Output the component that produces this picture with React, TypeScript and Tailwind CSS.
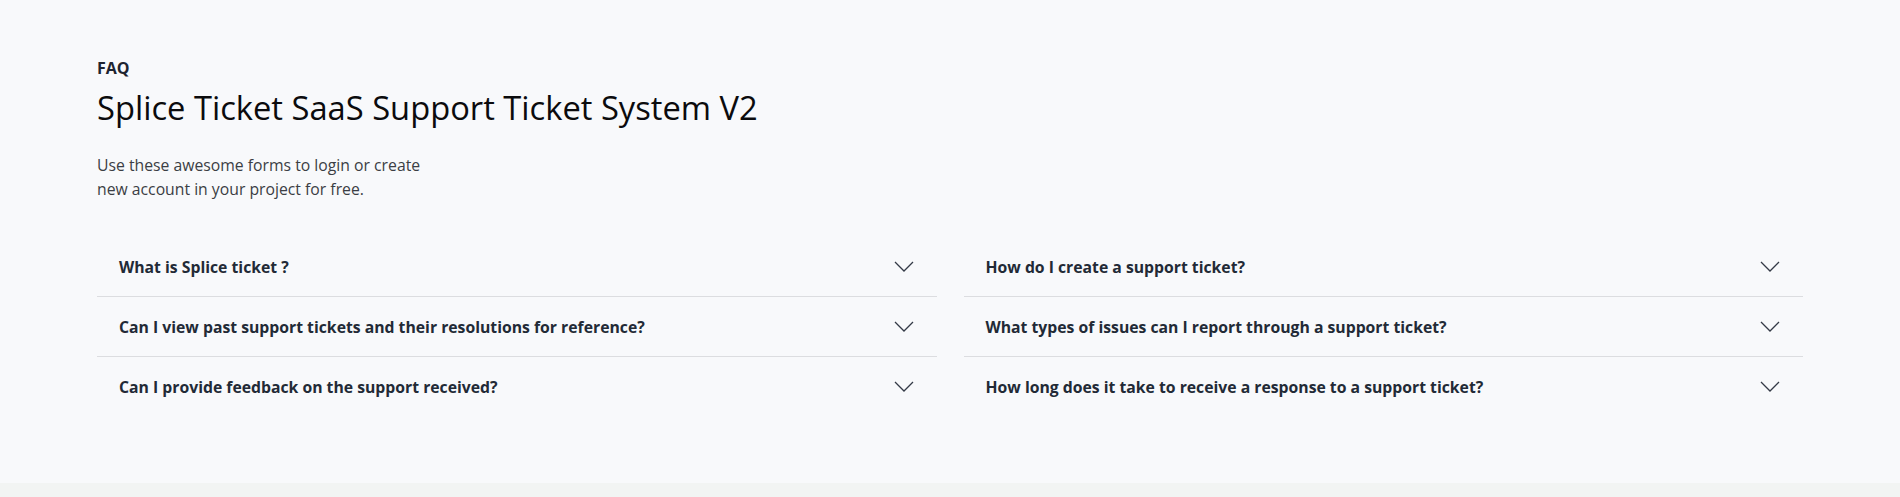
const leftItems = [
  "What is Splice ticket ?",
  "Can I view past support tickets and their resolutions for reference?",
  "Can I provide feedback on the support received?",
];

const rightItems = [
  "How do I create a support ticket?",
  "What types of issues can I report through a support ticket?",
  "How long does it take to receive a response to a support ticket?",
];

function Chevron() {
  return (
    <svg width="20" height="11" viewBox="0 0 20 11" fill="none" className="shrink-0">
      <polyline points="1,1 10,10 19,1" stroke="#343a46" strokeWidth="1.3" />
    </svg>
  );
}

function FaqColumn({ items }: { items: string[] }) {
  return (
    <div className="flex flex-col">
      {items.map((q, i) => (
        <button
          key={q}
          className={`flex items-center justify-between pl-[22px] pr-[23px] text-left ${
            i < items.length - 1 ? "h-[60px] border-b border-[#dcdde0]" : "h-[59px]"
          }`}
        >
          <span className="text-[15.75px] leading-6 font-bold text-[#222a36]">{q}</span>
          <Chevron />
        </button>
      ))}
    </div>
  );
}

export default function App() {
  return (
    <div className="bg-[#f8f9fb] font-['Open_Sans',sans-serif]">
      <section className="px-[97px] pt-[56px] pb-[67px]">
        <p className="text-base leading-6 font-bold text-[#1e2430]">FAQ</p>
        <h2 className="mt-[9px] text-[32.7px] leading-[38px] font-normal text-[#0b0b0d]">
          Splice Ticket SaaS Support Ticket System V2
        </h2>
        <p className="mt-[26px] text-[15.75px] leading-6 text-[#3b3e44]">
          Use these awesome forms to login or create
          <br />
          new account in your project for free.
        </p>
        <div className="mt-[36px] grid grid-cols-2 gap-x-[27px]">
          <FaqColumn items={leftItems} />
          <FaqColumn items={rightItems} />
        </div>
      </section>
      <div className="h-[14px] bg-[#f2f4f3]" />
    </div>
  );
}
